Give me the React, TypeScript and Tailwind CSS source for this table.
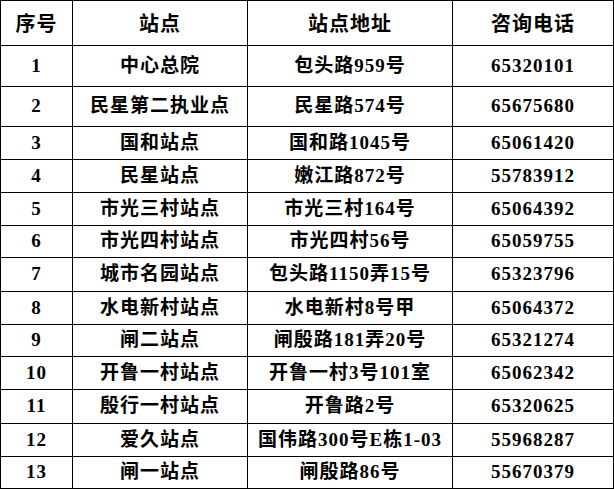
const rows: [string, string, string, string, number][] = [
  ['1', '中心总院', '包头路959号', '65320101', 41],
  ['2', '民星第二执业点', '民星路574号', '65675680', 40],
  ['3', '国和站点', '国和路1045号', '65061420', 33],
  ['4', '民星站点', '嫩江路872号', '55783912', 33],
  ['5', '市光三村站点', '市光三村164号', '65064392', 33],
  ['6', '市光四村站点', '市光四村56号', '65059755', 32],
  ['7', '城市名园站点', '包头路1150弄15号', '65323796', 34],
  ['8', '水电新村站点', '水电新村8号甲', '65064372', 33],
  ['9', '闸二站点', '闸殷路181弄20号', '65321274', 32],
  ['10', '开鲁一村站点', '开鲁一村3号101室', '65062342', 33],
  ['11', '殷行一村站点', '开鲁路2号', '65320625', 34],
  ['12', '爱久站点', '国伟路300号E栋1-03', '55968287', 33],
  ['13', '闸一站点', '闸殷路86号', '55670379', 32],
]

const cols = ['w-[72px]', 'w-[175px]', 'w-[205px]', 'w-[161px]']

export default function App() {
  return (
    <div className="w-[614px] h-[489px] bg-white text-black">
      <div className="w-[614px] border-t border-l border-black">
        {/* header */}
        <div className="flex h-[45px] border-b border-black font-bold text-[20px] tracking-[1px] font-['Noto_Sans_CJK_SC',sans-serif]">
          {['序号', '站点', '站点地址', '咨询电话'].map((h, i) => (
            <div key={h} className={`${cols[i]} flex items-center justify-center border-r border-black`}>
              {h}
            </div>
          ))}
        </div>
        {rows.map(([no, name, addr, tel, h]) => (
          <div
            key={no}
            className="flex border-b border-black font-bold text-[19px] tracking-[1px] font-['Liberation_Serif','Noto_Sans_CJK_SC',serif]"
            style={{ height: h }}
          >
            {[no, name, addr, tel].map((t, i) => (
              <div key={i} className={`${cols[i]} flex items-center justify-center border-r border-black`}>
                {t}
              </div>
            ))}
          </div>
        ))}
      </div>
    </div>
  )
}
